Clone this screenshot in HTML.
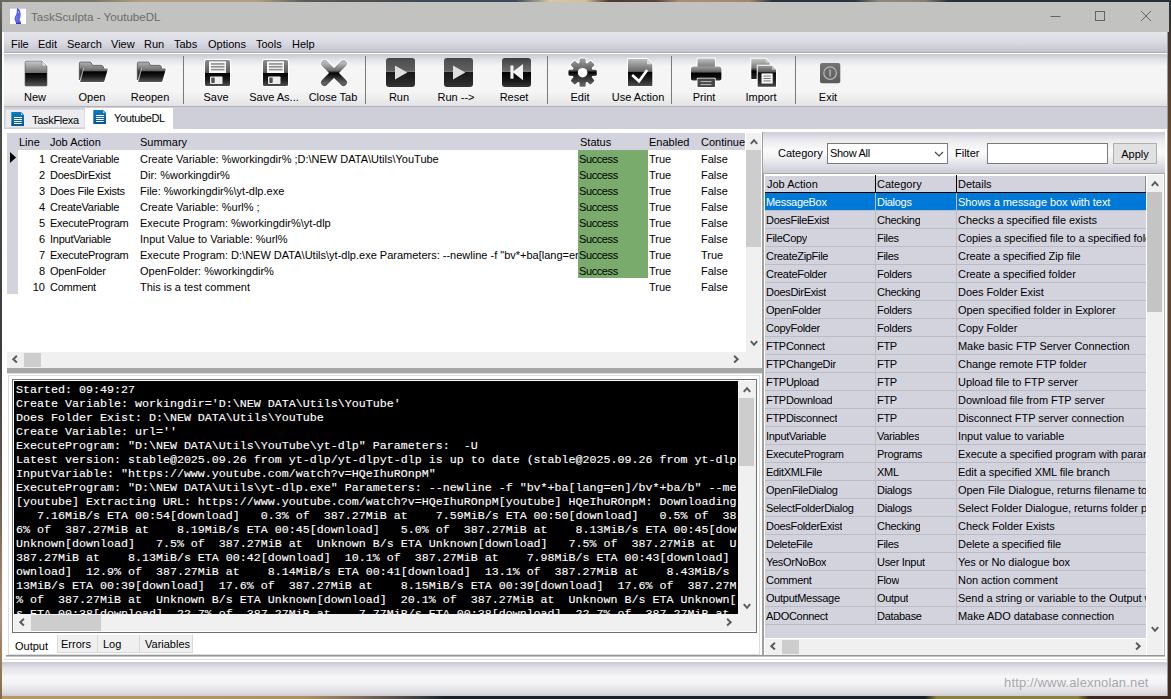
<!DOCTYPE html>
<html>
<head>
<meta charset="utf-8">
<title>TaskSculpta - YoutubeDL</title>
<style>
*{box-sizing:border-box;margin:0;padding:0}
html,body{width:1171px;height:699px;overflow:hidden;background:#5a5248}
body{font-family:"Liberation Sans",sans-serif;font-size:11px;color:#000;position:relative;line-height:13px}
.abs{position:absolute}
span,div{white-space:nowrap}
#desk{left:0;top:0;width:1171px;height:699px;background:#444}
#dt{left:0;top:0;width:1171px;height:2px;background:linear-gradient(90deg,#6a6a60 0,#7a7666 8%,#b0a080 12%,#b0a080 22%,#5a5a58 26%,#4a4e50 33%,#3a4a58 36%,#3a4a58 44%,#d8c8a0 47%,#d0c098 50%,#4a3a30 52%,#54443a 56%,#a89070 58%,#a08868 64%,#2a3440 66%,#2a3440 73%,#908878 75%,#888070 79%,#283038 81%,#283038 100%)}
#db{left:0;top:696px;width:1171px;height:3px;background:linear-gradient(90deg,#b89868 0,#b09060 26%,#7a6a58 31%,#3a3c40 36%,#1a2028 38%,#1a2028 79%,#8a8040 80%,#8a8040 92%,#3a2a20 93%,#3a2a20 100%)}
#dl{left:0;top:0;width:2px;height:699px;background:linear-gradient(180deg,#6a6860 0,#3c4246 8%,#4a4e4c 20%,#3a3c40 50%,#6a5a4c 70%,#b09078 88%,#8a6a48 100%)}
#dr{left:1168px;top:0;width:3px;height:699px;background:linear-gradient(180deg,#2a3036 0,#4a3a2c 8%,#6b4a30 22%,#5a4030 60%,#3a2a20 100%)}
#title{left:2px;top:2px;width:1167px;height:30px;background:#c2c2c0}
#menubar{left:4px;top:32px;width:1163px;height:20px;background:linear-gradient(#e4e4ea 0,#dadae2 50%,#c4c4d0 100%)}
#menubar span{position:absolute;top:6px}
#tbar{left:4px;top:53px;width:1163px;height:53px;background:linear-gradient(#fff 0,#fff 1px,#c8c8d2 1px,#dedee4 6px,#f0f0f2 11px,#f5f5f5 14px,#f5f5f5 38px,#ededee 46px,#e3e3e6 52px,#e3e3e6 100%)}
.lb{position:absolute;top:91px;width:80px;text-align:center}
.sep{position:absolute;top:56px;width:1px;height:48px;background:#7a7a7a}
#tabstrip{left:4px;top:106px;width:1163px;height:23px;background:#cfcfd9;border-top:1px solid #b2b2b8}
.hd{position:absolute;top:136px}
.lr{position:absolute;left:0;width:760px;height:16px}
.lr span{position:absolute;top:2px}
.rr{position:absolute;left:765px;width:381px;height:18px;border-bottom:1px solid #bcbcc4}
.rr span{position:absolute;top:3px;height:15px;overflow:hidden}
.rr .c1{left:1px;letter-spacing:-.3px}.rr .c2{left:112px;letter-spacing:-.3px}.rr .c3{left:193px;width:188px;letter-spacing:-.06px}
#con{left:14px;top:381px;width:724px;height:233px;background:#000;color:#fff;overflow:hidden;font-family:"Liberation Mono",monospace;font-size:11.67px;font-weight:normal;-webkit-text-stroke:.12px #fff;line-height:14px;padding:2px 0 0 2px}
#con div{white-space:pre;height:14px}
.sb{background:#f0f0f0}
.th{background:#cdcdcd}
</style>
</head>
<body>
<svg width="0" height="0" style="position:absolute"><defs><linearGradient id="gd" x1="0" y1="0" x2="0" y2="1"><stop offset="0" stop-color="#cacaca"/><stop offset="0.46" stop-color="#727272"/><stop offset="0.48" stop-color="#000"/><stop offset="0.7" stop-color="#1c1c1c"/><stop offset="1" stop-color="#555"/></linearGradient><linearGradient id="gfb" x1="0" y1="0" x2="0" y2="1"><stop offset="0" stop-color="#b4b4b4"/><stop offset="0.3" stop-color="#868686"/><stop offset="0.5" stop-color="#3a3a3a"/><stop offset="1" stop-color="#1e1e1e"/></linearGradient><linearGradient id="gff" x1="0" y1="0" x2="0" y2="1"><stop offset="0" stop-color="#909090"/><stop offset="0.22" stop-color="#626262"/><stop offset="0.3" stop-color="#000"/><stop offset="0.6" stop-color="#181818"/><stop offset="1" stop-color="#585858"/></linearGradient><linearGradient id="gs" x1="0" y1="0" x2="0" y2="1"><stop offset="0" stop-color="#8c8c8c"/><stop offset="0.48" stop-color="#5a5a5a"/><stop offset="0.5" stop-color="#000"/><stop offset="0.75" stop-color="#1a1a1a"/><stop offset="1" stop-color="#505050"/></linearGradient><linearGradient id="gl" x1="0" y1="0" x2="0" y2="1"><stop offset="0" stop-color="#6e6e6e"/><stop offset="1" stop-color="#c4c4c4"/></linearGradient><linearGradient id="gx" x1="0" y1="0" x2="0" y2="1"><stop offset="0" stop-color="#b4b4b4"/><stop offset="0.38" stop-color="#6c6c6c"/><stop offset="0.5" stop-color="#000"/><stop offset="0.62" stop-color="#181818"/><stop offset="1" stop-color="#5e5e5e"/></linearGradient><linearGradient id="gb" x1="0" y1="0" x2="0" y2="1"><stop offset="0" stop-color="#444"/><stop offset="0.1" stop-color="#505050"/><stop offset="0.42" stop-color="#5e5e5e"/><stop offset="0.47" stop-color="#7a7a7a"/><stop offset="0.5" stop-color="#181818"/><stop offset="0.8" stop-color="#262626"/><stop offset="1" stop-color="#343434"/></linearGradient><linearGradient id="gb2" x1="0" y1="0" x2="0" y2="1"><stop offset="0" stop-color="#3a3a3a"/><stop offset="0.1" stop-color="#4a4a4a"/><stop offset="0.42" stop-color="#6a6a6a"/><stop offset="0.47" stop-color="#7a7a7a"/><stop offset="0.5" stop-color="#000"/><stop offset="0.8" stop-color="#1a1a1a"/><stop offset="1" stop-color="#363636"/></linearGradient><linearGradient id="gg" x1="0" y1="0" x2="0" y2="1"><stop offset="0" stop-color="#9c9c9c"/><stop offset="0.4" stop-color="#606060"/><stop offset="0.49" stop-color="#000"/><stop offset="0.58" stop-color="#222"/><stop offset="1" stop-color="#666"/></linearGradient><linearGradient id="gu" x1="0" y1="0" x2="0" y2="1"><stop offset="0" stop-color="#bcbcbc"/><stop offset="0.46" stop-color="#686868"/><stop offset="0.48" stop-color="#000"/><stop offset="0.75" stop-color="#202020"/><stop offset="1" stop-color="#4e4e4e"/></linearGradient><linearGradient id="gpp" x1="0" y1="0" x2="0" y2="1"><stop offset="0" stop-color="#c0c0c0"/><stop offset="1" stop-color="#7a7a7a"/></linearGradient><linearGradient id="gpb" x1="0" y1="0" x2="0" y2="1"><stop offset="0" stop-color="#a0a0a0"/><stop offset="0.35" stop-color="#6a6a6a"/><stop offset="0.5" stop-color="#000"/><stop offset="0.8" stop-color="#101010"/><stop offset="1" stop-color="#303030"/></linearGradient><linearGradient id="gi1" x1="0" y1="0" x2="0" y2="1"><stop offset="0" stop-color="#c4c4c4"/><stop offset="0.45" stop-color="#7a7a7a"/><stop offset="0.62" stop-color="#000"/><stop offset="1" stop-color="#2a2a2a"/></linearGradient><linearGradient id="gi2" x1="0" y1="0" x2="0" y2="1"><stop offset="0" stop-color="#9c9c9c"/><stop offset="0.28" stop-color="#5c5c5c"/><stop offset="0.34" stop-color="#0c0c0c"/><stop offset="0.7" stop-color="#222"/><stop offset="1" stop-color="#4a4a4a"/></linearGradient><linearGradient id="ge" x1="0" y1="0" x2="0" y2="1"><stop offset="0" stop-color="#747474"/><stop offset="1" stop-color="#5a5a5a"/></linearGradient><linearGradient id="gt" x1="0" y1="0" x2="0" y2="1"><stop offset="0" stop-color="#0c7cc0"/><stop offset="1" stop-color="#065892"/></linearGradient></defs></svg>
<div id="desk" class="abs"></div><div id="dt" class="abs"></div><div id="db" class="abs"></div><div id="dl" class="abs"></div><div id="dr" class="abs"></div>
<div class="abs" style="left:2px;top:2px;width:1166px;height:694px;background:#fff;border-bottom:1px solid #8c8c8c;border-right:1px solid #9a9a9a"></div>
<div id="title" class="abs"></div>

<svg class="abs" style="left:10px;top:8px" width="16" height="16" viewBox="0 0 16 16"><rect width="16" height="16" fill="#fff"/><rect width="16" height="1" fill="#ccd0ff"/><path d="M7.300 .3C8.500 .8 9.500 1.800 10.200 3.600C10.800 5.200 10.900 7.200 10.400 9.200C10 10.600 9.400 11.500 9.800 12.600C10.100 13.400 10.900 13.800 11 14.600V15.800H6V14.700C5.300 13.600 4.600 12.200 4.500 10.600C4.500 9.200 5.300 8 6 6.900C6.500 5.900 6.700 4.600 6.800 3.200C6.800 2.100 7 1.100 7.300 .3Z" fill="#5c62ea"/><path d="M7.300 .3C8.500 .8 9.500 1.800 10.100 3.400L8.800 2.600C8.300 2 7.800 1.800 7.400 1.900Z" fill="#3a3ec8"/><path d="M8.300 3.200C8.900 3.800 9 4.800 8.700 5.400C8.300 5 8 4.200 8.300 3.200Z" fill="#e8eaff"/><path d="M7.200 8C6.600 9.500 6.600 11 7.200 12.500" stroke="#8a90f4" stroke-width=".8" fill="none"/><rect x="6" y="14.800" width="5" height="1.200" fill="#3236c4"/></svg>
<span class="abs" style="left:31px;top:10px;font-size:11.600px;color:#6c6c6c;line-height:14px">TaskSculpta - YoutubeDL</span>
<svg class="abs" style="left:1040px;top:2px" width="129" height="30" viewBox="0 0 129 30"><path d="M10.500 14.500h10" stroke="#666" stroke-width="1" fill="none"/><rect x="55.500" y="9.500" width="9" height="9" stroke="#666" stroke-width="1" fill="none"/><path d="M101 9l10 10M111 9l-10 10" stroke="#666" stroke-width="1" fill="none"/></svg>
<div id="menubar" class="abs">
<span style="left:7px">File</span>
<span style="left:34px">Edit</span>
<span style="left:63px">Search</span>
<span style="left:107px">View</span>
<span style="left:140px">Run</span>
<span style="left:170px">Tabs</span>
<span style="left:204px">Options</span>
<span style="left:252px">Tools</span>
<span style="left:288px">Help</span>
</div>
<div class="abs" style="left:4px;top:52px;width:1163px;height:1px;background:#a8a8b0"></div>
<div id="tbar" class="abs"></div>
<svg class="abs" style="left:23px;top:59px;overflow:visible" width="28" height="31" viewBox="0 0 28 31"><path d="M2 2H19L24 7V27H2Z" fill="#fff" stroke="#fff" stroke-width="2" stroke-linejoin="round"/><path d="M2.800 2H19L24 7V26.200Q24 27 23.200 27H2.800Q2 27 2 26.200V2.800Q2 2 2.800 2Z" fill="url(#gd)" stroke="#505050" stroke-width=".6"/><path d="M19 2V7H24Z" fill="#e4e4e4"/><path d="M19 2V7H24" fill="none" stroke="#8a8a8a" stroke-width=".7"/></svg>
<span class="lb" style="left:-5px">New</span>
<svg class="abs" style="left:76px;top:59px;overflow:visible" width="36" height="28" viewBox="0 0 36 28"><path d="M3.300 4.200Q3.300 3 4.500 3H14Q15 3 15.300 4L16.500 6.300H25.500Q26.500 6.300 27 7.200L27.800 9.200L31 9.500Q32 9.500 31.800 10.300L28.300 22.200Q28 23 27.200 23H4.800Q3.300 23 3.300 21Z" fill="#fff" stroke="#fff" stroke-width="2" stroke-linejoin="round"/><path d="M3.300 4.200Q3.300 3 4.500 3H14Q15 3 15.300 4L16.500 6.300H25.500Q26.500 6.300 27 7.200L27.600 9V12H7L3.300 21Z" fill="url(#gfb)" stroke="#4c4c4c" stroke-width=".8"/><path d="M8.300 8.500Q7.600 8.500 7.300 9.300L4 22Q3.800 23 4.800 23H27.200Q28 23 28.300 22.200L31.800 10.300Q32 9.500 31 9.500Z" fill="url(#gff)"/><path d="M7.600 9.200L4.300 22" stroke="#e0e0e0" stroke-width=".7" fill="none"/></svg>
<span class="lb" style="left:52px">Open</span>
<svg class="abs" style="left:134px;top:59px;overflow:visible" width="36" height="28" viewBox="0 0 36 28"><path d="M3.300 4.200Q3.300 3 4.500 3H14Q15 3 15.300 4L16.500 6.300H25.500Q26.500 6.300 27 7.200L27.800 9.200L31 9.500Q32 9.500 31.800 10.300L28.300 22.200Q28 23 27.200 23H4.800Q3.300 23 3.300 21Z" fill="#fff" stroke="#fff" stroke-width="2" stroke-linejoin="round"/><path d="M3.300 4.200Q3.300 3 4.500 3H14Q15 3 15.300 4L16.500 6.300H25.500Q26.500 6.300 27 7.200L27.600 9V12H7L3.300 21Z" fill="url(#gfb)" stroke="#4c4c4c" stroke-width=".8"/><path d="M8.300 8.500Q7.600 8.500 7.300 9.300L4 22Q3.800 23 4.800 23H27.200Q28 23 28.300 22.200L31.800 10.300Q32 9.500 31 9.500Z" fill="url(#gff)"/><path d="M7.600 9.200L4.300 22" stroke="#e0e0e0" stroke-width=".7" fill="none"/></svg>
<span class="lb" style="left:110px">Reopen</span>
<svg class="abs" style="left:203px;top:58px;overflow:visible" width="30" height="30" viewBox="0 0 30 30"><rect x="2" y="2" width="25" height="26" rx="1.500" fill="#fff" stroke="#fff" stroke-width="2" stroke-linejoin="round"/><rect x="2" y="2" width="25" height="26" rx="1.500" fill="url(#gs)"/><rect x="6" y="3.300" width="17" height="11.700" fill="#f6f6f6"/><rect x="8" y="5.300" width="13.500" height="1.800" fill="url(#gl)"/><rect x="8" y="8.100" width="13.500" height="1.800" fill="url(#gl)"/><rect x="8" y="10.900" width="13.500" height="1.800" fill="url(#gl)"/><rect x="7" y="18.500" width="12.500" height="7.500" rx=".8" fill="#ececec"/><rect x="8.300" y="19.500" width="3.400" height="5.500" rx=".8" fill="#505050"/></svg>
<span class="lb" style="left:176px">Save</span>
<svg class="abs" style="left:261px;top:58px;overflow:visible" width="30" height="30" viewBox="0 0 30 30"><rect x="2" y="2" width="25" height="26" rx="1.500" fill="#fff" stroke="#fff" stroke-width="2" stroke-linejoin="round"/><rect x="2" y="2" width="25" height="26" rx="1.500" fill="url(#gs)"/><rect x="6" y="3.300" width="17" height="11.700" fill="#f6f6f6"/><rect x="8" y="5.300" width="13.500" height="1.800" fill="url(#gl)"/><rect x="8" y="8.100" width="13.500" height="1.800" fill="url(#gl)"/><rect x="8" y="10.900" width="13.500" height="1.800" fill="url(#gl)"/><rect x="7" y="18.500" width="12.500" height="7.500" rx=".8" fill="#ececec"/><rect x="8.300" y="19.500" width="3.400" height="5.500" rx=".8" fill="#505050"/></svg>
<span class="lb" style="left:234px">Save As...</span>
<svg class="abs" style="left:319px;top:58px;overflow:visible" width="30" height="30" viewBox="0 0 30 30"><path d="M5.500 5.500L24.500 24.500M24.500 5.500L5.500 24.500" stroke="#fff" stroke-width="9" stroke-linecap="round" fill="none"/><path d="M5.500 5.500L24.500 24.500" stroke="url(#gx)" stroke-width="7" stroke-linecap="round" fill="none" gradientUnits="userSpaceOnUse"/><path d="M24.500 5.500L5.500 24.500" stroke="url(#gx)" stroke-width="7" stroke-linecap="round" fill="none"/></svg>
<span class="lb" style="left:293px">Close Tab</span>
<svg class="abs" style="left:386px;top:58px;overflow:visible" width="29" height="29" viewBox="0 0 29 29"><rect width="29" height="29" rx="3" fill="url(#gb)"/><path d="M9 7.500L21.300 14.500L9 21.500Z" fill="#dedede"/></svg>
<span class="lb" style="left:359px">Run</span>
<svg class="abs" style="left:444px;top:58px;overflow:visible" width="29" height="29" viewBox="0 0 29 29"><rect width="29" height="29" rx="3" fill="url(#gb)"/><path d="M9 7.500L21.300 14.500L9 21.500Z" fill="#dedede"/></svg>
<span class="lb" style="left:416px">Run --&gt;</span>
<svg class="abs" style="left:502px;top:58px;overflow:visible" width="29" height="29" viewBox="0 0 29 29"><rect width="29" height="29" rx="3" fill="url(#gb2)"/><rect x="8.400" y="7.500" width="3.100" height="13.200" fill="#f2f2f2"/><path d="M21 6V22.200L10.500 14.100Z" fill="#f2f2f2"/></svg>
<span class="lb" style="left:474px">Reset</span>
<svg class="abs" style="left:567px;top:57px;overflow:visible" width="32" height="32" viewBox="0 0 32 32"><path d="M13.61 2.55L17.59 2.55L17.81 6.67L20.42 7.75L23.49 5.00L26.30 7.81L23.55 10.88L24.63 13.49L28.75 13.71L28.75 17.69L24.63 17.91L23.55 20.52L26.30 23.59L23.49 26.40L20.42 23.65L17.81 24.73L17.59 28.85L13.61 28.85L13.39 24.73L10.78 23.65L7.71 26.40L4.90 23.59L7.65 20.52L6.57 17.91L2.45 17.69L2.45 13.71L6.57 13.49L7.65 10.88L4.90 7.81L7.71 5.00L10.78 7.75L13.39 6.67Z" fill="#fff" stroke="#fff" stroke-width="4" stroke-linejoin="round"/><path d="M13.61 2.55L17.59 2.55L17.81 6.67L20.42 7.75L23.49 5.00L26.30 7.81L23.55 10.88L24.63 13.49L28.75 13.71L28.75 17.69L24.63 17.91L23.55 20.52L26.30 23.59L23.49 26.40L20.42 23.65L17.81 24.73L17.59 28.85L13.61 28.85L13.39 24.73L10.78 23.65L7.71 26.40L4.90 23.59L7.65 20.52L6.57 17.91L2.45 17.69L2.45 13.71L6.57 13.49L7.65 10.88L4.90 7.81L7.71 5.00L10.78 7.75L13.39 6.67Z" fill="url(#gg)" stroke="url(#gg)" stroke-width="2" stroke-linejoin="round"/><circle cx="15.6" cy="15.7" r="4.800" fill="#fff"/></svg>
<span class="lb" style="left:540px">Edit</span>
<svg class="abs" style="left:626px;top:57px;overflow:visible" width="28" height="32" viewBox="0 0 28 32"><path d="M2 2H21L26.300 7.300V29H2Z" fill="#fff" stroke="#fff" stroke-width="2" stroke-linejoin="round"/><path d="M2 2H21L26.300 7.300V29H2Z" fill="url(#gu)"/><path d="M21 2V7.300H26.300Z" fill="#dadada"/><path d="M6.200 18L13 24.300L21.200 13" stroke="#fff" stroke-width="2.600" fill="none" stroke-linejoin="miter"/></svg>
<span class="lb" style="left:598px">Use Action</span>
<svg class="abs" style="left:690px;top:57px;overflow:visible" width="33" height="32" viewBox="0 0 33 32"><path d="M7.500 1.500H25V9.500H29c1.500 0 2.400.9 2.400 2.400V23.500H25V30H7.500V23.500H1V11.900C1 10.400 1.900 9.500 3.400 9.500H7.500Z" fill="#fff" stroke="#fff" stroke-width="2" stroke-linejoin="round"/><rect x="7.500" y="1.500" width="17.500" height="8.500" rx="1" fill="url(#gpp)"/><path d="M1 12.300C1 10.500 2 9.500 3.800 9.500H28.600c1.800 0 2.800 1 2.800 2.800V21.500c0 1.300-.7 2-2 2H3c-1.300 0-2-.7-2-2Z" fill="url(#gpb)"/><rect x="6.800" y="20.800" width="18.900" height="9.900" rx="1" fill="#fff"/><rect x="7.500" y="21.500" width="17.500" height="8.500" rx=".8" fill="#484848"/><rect x="10.500" y="24" width="11" height="1.100" fill="#b4b4b4"/><rect x="10.500" y="27" width="11" height="1.100" fill="#b4b4b4"/></svg>
<span class="lb" style="left:664px">Print</span>
<svg class="abs" style="left:750px;top:57px;overflow:visible" width="28" height="32" viewBox="0 0 28 32"><path d="M1.300 1.800H15.700L19.700 5.800V22H1.300Z" fill="#fff" stroke="#fff" stroke-width="2" stroke-linejoin="round"/><path d="M1.300 1.800H15.700L19.700 5.800V22H1.300Z" fill="url(#gi1)"/><path d="M15.700 1.800V5.800H19.700Z" fill="#d0d0d0"/><path d="M7.700 8.700H22L26 12.700V29.800H7.700Z" fill="#fff" stroke="#fff" stroke-width="2" stroke-linejoin="round"/><path d="M7.700 8.700H22L26 12.700V29.800H7.700Z" fill="url(#gi2)"/><path d="M22 8.700V12.700H26Z" fill="#c4c4c4"/><rect x="11.500" y="16.400" width="11.200" height="10.200" fill="#f4f4f4"/><rect x="13.500" y="18.600" width="7.200" height="1" fill="#777"/><rect x="13.500" y="21" width="7.200" height="1" fill="#777"/><rect x="13.500" y="23.400" width="7.200" height="1" fill="#777"/></svg>
<span class="lb" style="left:721px">Import</span>
<svg class="abs" style="left:818px;top:61px;overflow:visible" width="24" height="24" viewBox="0 0 24 24"><rect x="2" y="2" width="20.300" height="20.300" rx="2" fill="url(#ge)"/><circle cx="12.100" cy="12.100" r="6.300" fill="none" stroke="#b6b6b6" stroke-width="1.300"/><rect x="11.400" y="8.600" width="1.400" height="7" fill="#b6b6b6"/></svg>
<span class="lb" style="left:788px">Exit</span>
<div class="sep" style="left:183px"></div>
<div class="sep" style="left:365px"></div>
<div class="sep" style="left:547px"></div>
<div class="sep" style="left:671px"></div>
<div class="sep" style="left:795px"></div>
<div id="tabstrip" class="abs"></div>
<div class="abs" style="left:5px;top:109px;width:80px;height:19px;background:#ececf0;border:1px solid #dadae0"></div>
<div class="abs" style="left:85px;top:108px;width:88px;height:22px;background:#fff"></div>
<svg class="abs" style="left:11px;top:112px;overflow:visible" width="13" height="15" viewBox="0 0 13 15"><path d="M.3 0H10L13 3V14H.3Z" fill="url(#gt)"/><path d="M10 0V3H13Z" fill="#fff"/><path d="M10.300 .2L12.800 2.700H11.300Q10.300 2.700 10.300 1.700Z" fill="#1878b8"/><rect x="3" y="5" width="8" height="1" fill="#fff"/><rect x="3" y="7" width="8" height="1" fill="#fff"/><rect x="3" y="9" width="7.700" height="1" fill="#fff"/><rect x="3" y="11" width="7.700" height="1" fill="#fff"/></svg>
<span class="abs" style="left:32px;top:114px;letter-spacing:-.3px">TaskFlexa</span>
<svg class="abs" style="left:93px;top:110px;overflow:visible" width="13" height="15" viewBox="0 0 13 15"><path d="M.3 0H10L13 3V14H.3Z" fill="url(#gt)"/><path d="M10 0V3H13Z" fill="#fff"/><path d="M10.300 .2L12.800 2.700H11.300Q10.300 2.700 10.300 1.700Z" fill="#1878b8"/><rect x="3" y="5" width="8" height="1" fill="#fff"/><rect x="3" y="7" width="8" height="1" fill="#fff"/><rect x="3" y="9" width="7.700" height="1" fill="#fff"/><rect x="3" y="11" width="7.700" height="1" fill="#fff"/></svg>
<span class="abs" style="left:114px;top:112px;letter-spacing:-.35px">YoutubeDL</span>
<div class="abs" style="left:4px;top:129px;width:1163px;height:528px;background:#fff"></div>
<div class="abs" style="left:7px;top:133px;width:738px;height:17px;background:#d3d3de"></div>
<div class="abs" style="left:7px;top:150px;width:11px;height:144px;background:#d3d3de"></div>
<span class="hd" style="left:19px">Line</span>
<span class="hd" style="left:50px">Job Action</span>
<span class="hd" style="left:140px">Summary</span>
<span class="hd" style="left:580px">Status</span>
<span class="hd" style="left:649px">Enabled</span>
<span class="hd" style="left:701px">Continue</span>
<svg class="abs" style="left:10px;top:152px" width="6" height="11" viewBox="0 0 6 11"><path d="M0 0l6 5.500-6 5.500z" fill="#000"/></svg>
<div class="abs" style="left:578px;top:150px;width:70px;height:128px;background:#78ab6c"></div>
<div class="lr" style="top:151px"><span style="left:20px;width:25px;text-align:right">1</span><span style="left:50px;letter-spacing:-.25px">CreateVariable</span><span style="left:140px;width:438px;overflow:hidden">Create Variable: %workingdir% ;D:\NEW DATA\Utils\YouTube</span><span style="left:579px;letter-spacing:-.4px">Success</span><span style="left:649px">True</span><span style="left:701px">False</span></div>
<div class="lr" style="top:167px"><span style="left:20px;width:25px;text-align:right">2</span><span style="left:50px;letter-spacing:-.25px">DoesDirExist</span><span style="left:140px;width:438px;overflow:hidden">Dir: %workingdir%</span><span style="left:579px;letter-spacing:-.4px">Success</span><span style="left:649px">True</span><span style="left:701px">False</span></div>
<div class="lr" style="top:183px"><span style="left:20px;width:25px;text-align:right">3</span><span style="left:50px;letter-spacing:-.25px">Does File Exists</span><span style="left:140px;width:438px;overflow:hidden">File: %workingdir%\yt-dlp.exe</span><span style="left:579px;letter-spacing:-.4px">Success</span><span style="left:649px">True</span><span style="left:701px">False</span></div>
<div class="lr" style="top:199px"><span style="left:20px;width:25px;text-align:right">4</span><span style="left:50px;letter-spacing:-.25px">CreateVariable</span><span style="left:140px;width:438px;overflow:hidden">Create Variable: %url% ;</span><span style="left:579px;letter-spacing:-.4px">Success</span><span style="left:649px">True</span><span style="left:701px">False</span></div>
<div class="lr" style="top:215px"><span style="left:20px;width:25px;text-align:right">5</span><span style="left:50px;letter-spacing:-.25px">ExecuteProgram</span><span style="left:140px;width:438px;overflow:hidden">Execute Program: %workingdir%\yt-dlp</span><span style="left:579px;letter-spacing:-.4px">Success</span><span style="left:649px">True</span><span style="left:701px">False</span></div>
<div class="lr" style="top:231px"><span style="left:20px;width:25px;text-align:right">6</span><span style="left:50px;letter-spacing:-.25px">InputVariable</span><span style="left:140px;width:438px;overflow:hidden">Input Value to Variable: %url%</span><span style="left:579px;letter-spacing:-.4px">Success</span><span style="left:649px">True</span><span style="left:701px">False</span></div>
<div class="lr" style="top:247px"><span style="left:20px;width:25px;text-align:right">7</span><span style="left:50px;letter-spacing:-.25px">ExecuteProgram</span><span style="left:140px;width:438px;overflow:hidden">Execute Program: D:\NEW DATA\Utils\yt-dlp.exe Parameters: --newline -f "bv*+ba[lang=en]/bv*+ba/b"</span><span style="left:579px;letter-spacing:-.4px">Success</span><span style="left:649px">True</span><span style="left:701px">True</span></div>
<div class="lr" style="top:263px"><span style="left:20px;width:25px;text-align:right">8</span><span style="left:50px;letter-spacing:-.25px">OpenFolder</span><span style="left:140px;width:438px;overflow:hidden">OpenFolder: %workingdir%</span><span style="left:579px;letter-spacing:-.4px">Success</span><span style="left:649px">True</span><span style="left:701px">False</span></div>
<div class="lr" style="top:279px"><span style="left:20px;width:25px;text-align:right">10</span><span style="left:50px;letter-spacing:-.25px">Comment</span><span style="left:140px;width:438px;overflow:hidden">This is a test comment</span><span style="left:579px;letter-spacing:-.4px"></span><span style="left:649px">True</span><span style="left:701px">False</span></div>
<div class="abs sb" style="left:746px;top:133px;width:15px;height:219px"></div>
<div class="abs th" style="left:746px;top:150px;width:15px;height:97px"></div>
<svg class="abs" style="left:750px;top:138px" width="8" height="7"><path d="M.8 5.800L4 2.200L7.200 5.800" stroke="#5c5c5c" stroke-width="2" fill="none"/></svg>
<svg class="abs" style="left:750px;top:340px" width="8" height="7"><path d="M.8 1.200L4 4.800L7.200 1.200" stroke="#5c5c5c" stroke-width="2" fill="none"/></svg>
<div class="abs sb" style="left:7px;top:352px;width:754px;height:16px"></div>
<div class="abs th" style="left:24px;top:353px;width:17px;height:14px"></div>
<svg class="abs" style="left:11px;top:355px" width="7" height="9"><path d="M5.900 .8L2.300 4.200L5.900 7.600" stroke="#5c5c5c" stroke-width="2" fill="none"/></svg>
<svg class="abs" style="left:733px;top:355px" width="7" height="9"><path d="M1.100 .8L4.700 4.200L1.100 7.600" stroke="#5c5c5c" stroke-width="2" fill="none"/></svg>
<div class="abs" style="left:7px;top:368px;width:756px;height:6px;background:linear-gradient(#a6a6a6 0,#a6a6a6 5px,#dcdcdc 5px)"></div>
<div class="abs" style="left:762px;top:132px;width:2px;height:524px;background:#a0a0a0"></div>
<div class="abs" style="left:8px;top:375px;width:752px;height:280px;border:1px solid #dcdcdc"></div>
<div class="abs" style="left:12px;top:379px;width:745px;height:254px;border:1px solid #707070"></div>
<div id="con" class="abs"><div>Started: 09:49:27</div><div>Create Variable: workingdir='D:\NEW DATA\Utils\YouTube'</div><div>Does Folder Exist: D:\NEW DATA\Utils\YouTube</div><div>Create Variable: url=''</div><div>ExecuteProgram: "D:\NEW DATA\Utils\YouTube\yt-dlp" Parameters:  -U</div><div>Latest version: stable@2025.09.26 from yt-dlp/yt-dlpyt-dlp is up to date (stable@2025.09.26 from yt-dlp</div><div>InputVariable: "https://www.youtube.com/watch?v=HQeIhuROnpM"</div><div>ExecuteProgram: "D:\NEW DATA\Utils\yt-dlp.exe" Parameters: --newline -f "bv*+ba[lang=en]/bv*+ba/b" --me</div><div>[youtube] Extracting URL: https://www.youtube.com/watch?v=HQeIhuROnpM[youtube] HQeIhuROnpM: Downloading</div><div>   7.16MiB/s ETA 00:54[download]   0.3% of  387.27MiB at    7.59MiB/s ETA 00:50[download]   0.5% of  38</div><div>6% of  387.27MiB at    8.19MiB/s ETA 00:45[download]   5.0% of  387.27MiB at    8.13MiB/s ETA 00:45[dow</div><div>Unknown[download]   7.5% of  387.27MiB at  Unknown B/s ETA Unknown[download]   7.5% of  387.27MiB at  U</div><div>387.27MiB at    8.13MiB/s ETA 00:42[download]  10.1% of  387.27MiB at    7.98MiB/s ETA 00:43[download] </div><div>ownload]  12.9% of  387.27MiB at    8.14MiB/s ETA 00:41[download]  13.1% of  387.27MiB at    8.43MiB/s </div><div>13MiB/s ETA 00:39[download]  17.6% of  387.27MiB at    8.15MiB/s ETA 00:39[download]  17.6% of  387.27M</div><div>% of  387.27MiB at  Unknown B/s ETA Unknown[download]  20.1% of  387.27MiB at  Unknown B/s ETA Unknown[</div><div>s ETA 00:38[download]  22.7% of  387.27MiB at    7.77MiB/s ETA 00:38[download]  22.7% of  387.27MiB at </div></div>
<div class="abs sb" style="left:738px;top:381px;width:18px;height:233px"></div>
<div class="abs th" style="left:739px;top:398px;width:15px;height:68px"></div>
<svg class="abs" style="left:743px;top:386px" width="8" height="7"><path d="M.8 5.800L4 2.200L7.200 5.800" stroke="#5c5c5c" stroke-width="2" fill="none"/></svg>
<svg class="abs" style="left:743px;top:603px" width="8" height="7"><path d="M.8 1.200L4 4.800L7.200 1.200" stroke="#5c5c5c" stroke-width="2" fill="none"/></svg>
<div class="abs sb" style="left:14px;top:614px;width:742px;height:17px"></div>
<div class="abs th" style="left:31px;top:615px;width:70px;height:16px"></div>
<svg class="abs" style="left:18px;top:618px" width="7" height="9"><path d="M5.900 .8L2.300 4.200L5.900 7.600" stroke="#5c5c5c" stroke-width="2" fill="none"/></svg>
<svg class="abs" style="left:726px;top:618px" width="7" height="9"><path d="M1.100 .8L4.700 4.200L1.100 7.600" stroke="#5c5c5c" stroke-width="2" fill="none"/></svg>
<div class="abs" style="left:57px;top:635px;width:136px;height:18px;background:#f0f0f0;border:1px solid #d9d9d9;border-top:0"></div>
<div class="abs" style="left:97px;top:635px;width:1px;height:18px;background:#d9d9d9"></div>
<div class="abs" style="left:139px;top:635px;width:1px;height:18px;background:#d9d9d9"></div>
<span class="abs" style="left:15px;top:640px">Output</span>
<span class="abs" style="left:61px;top:638px">Errors</span>
<span class="abs" style="left:103px;top:638px">Log</span>
<span class="abs" style="left:145px;top:638px">Variables</span>
<div class="abs" style="left:763px;top:132px;width:402px;height:42px;background:linear-gradient(#cdcdd8 0,#ececf0 22%,#fafafb 45%,#f4f4f6 60%,#cbcbd6 100%);border-bottom:1px solid #a8a8ae"></div>
<span class="abs" style="left:778px;top:147px">Category</span>
<div class="abs" style="left:827px;top:143px;width:121px;height:21px;background:#fff;border:1px solid #7a7a7a"></div>
<span class="abs" style="left:830px;top:147px;letter-spacing:-.3px">Show All</span>
<svg class="abs" style="left:934px;top:151px" width="10" height="6"><path d="M1 1l4 4 4-4" stroke="#444" stroke-width="1.100" fill="none"/></svg>
<span class="abs" style="left:955px;top:147px">Filter</span>
<div class="abs" style="left:987px;top:143px;width:121px;height:21px;background:#fff;border:1px solid #7a7a7a"></div>
<div class="abs" style="left:1113px;top:143px;width:44px;height:21px;background:#e1e1e1;border:1px solid #adadad"></div>
<span class="abs" style="left:1113px;top:148px;width:44px;text-align:center">Apply</span>
<div class="abs" style="left:765px;top:176px;width:381px;height:462px;background:#d3d3de"></div>
<div class="abs" style="left:765px;top:192px;width:381px;height:1px;background:#000"></div>
<div class="abs" style="left:765px;top:193px;width:381px;height:17px;background:#0078d7"></div>
<div class="abs" style="left:875px;top:175px;width:1px;height:18px;background:#000"></div>
<div class="abs" style="left:956px;top:175px;width:1px;height:18px;background:#000"></div>
<div class="abs" style="left:1145px;top:176px;width:1px;height:16px;background:#8a8a8a"></div>
<div class="abs" style="left:875px;top:193px;width:1px;height:432px;background:#bcbcc4"></div>
<div class="abs" style="left:956px;top:193px;width:1px;height:432px;background:#bcbcc4"></div>
<span class="abs" style="left:767px;top:178px">Job Action</span>
<span class="abs" style="left:877px;top:178px">Category</span>
<span class="abs" style="left:958px;top:178px">Details</span>
<div class="rr" style="top:193px;color:#fff"><span class="c1">MessageBox</span><span class="c2">Dialogs</span><span class="c3">Shows a message box with text</span></div>
<div class="rr" style="top:211px"><span class="c1">DoesFileExist</span><span class="c2">Checking</span><span class="c3">Checks a specified file exists</span></div>
<div class="rr" style="top:229px"><span class="c1">FileCopy</span><span class="c2">Files</span><span class="c3">Copies a specified file to a specified folder</span></div>
<div class="rr" style="top:247px"><span class="c1">CreateZipFile</span><span class="c2">Files</span><span class="c3">Create a specified Zip file</span></div>
<div class="rr" style="top:265px"><span class="c1">CreateFolder</span><span class="c2">Folders</span><span class="c3">Create a specified folder</span></div>
<div class="rr" style="top:283px"><span class="c1">DoesDirExist</span><span class="c2">Checking</span><span class="c3">Does Folder Exist</span></div>
<div class="rr" style="top:301px"><span class="c1">OpenFolder</span><span class="c2">Folders</span><span class="c3">Open specified folder in Explorer</span></div>
<div class="rr" style="top:319px"><span class="c1">CopyFolder</span><span class="c2">Folders</span><span class="c3">Copy Folder</span></div>
<div class="rr" style="top:337px"><span class="c1">FTPConnect</span><span class="c2">FTP</span><span class="c3">Make basic FTP Server Connection</span></div>
<div class="rr" style="top:355px"><span class="c1">FTPChangeDir</span><span class="c2">FTP</span><span class="c3">Change remote FTP folder</span></div>
<div class="rr" style="top:373px"><span class="c1">FTPUpload</span><span class="c2">FTP</span><span class="c3">Upload file to FTP server</span></div>
<div class="rr" style="top:391px"><span class="c1">FTPDownload</span><span class="c2">FTP</span><span class="c3">Download file from FTP server</span></div>
<div class="rr" style="top:409px"><span class="c1">FTPDisconnect</span><span class="c2">FTP</span><span class="c3">Disconnect FTP server connection</span></div>
<div class="rr" style="top:427px"><span class="c1">InputVariable</span><span class="c2">Variables</span><span class="c3">Input value to variable</span></div>
<div class="rr" style="top:445px"><span class="c1">ExecuteProgram</span><span class="c2">Programs</span><span class="c3">Execute a specified program with parameters</span></div>
<div class="rr" style="top:463px"><span class="c1">EditXMLFile</span><span class="c2">XML</span><span class="c3">Edit a specified XML file branch</span></div>
<div class="rr" style="top:481px"><span class="c1">OpenFileDialog</span><span class="c2">Dialogs</span><span class="c3">Open File Dialogue, returns filename to variable</span></div>
<div class="rr" style="top:499px"><span class="c1">SelectFolderDialog</span><span class="c2">Dialogs</span><span class="c3">Select Folder Dialogue, returns folder path</span></div>
<div class="rr" style="top:517px"><span class="c1">DoesFolderExist</span><span class="c2">Checking</span><span class="c3">Check Folder Exists</span></div>
<div class="rr" style="top:535px"><span class="c1">DeleteFile</span><span class="c2">Files</span><span class="c3">Delete a specified file</span></div>
<div class="rr" style="top:553px"><span class="c1">YesOrNoBox</span><span class="c2">User Input</span><span class="c3">Yes or No dialogue box</span></div>
<div class="rr" style="top:571px"><span class="c1">Comment</span><span class="c2">Flow</span><span class="c3">Non action comment</span></div>
<div class="rr" style="top:589px"><span class="c1">OutputMessage</span><span class="c2">Output</span><span class="c3">Send a string or variable to the Output window</span></div>
<div class="rr" style="top:607px"><span class="c1">ADOConnect</span><span class="c2">Database</span><span class="c3">Make ADO database connection</span></div>
<div class="abs sb" style="left:1147px;top:175px;width:16px;height:480px"></div>
<div class="abs th" style="left:1147px;top:192px;width:15px;height:120px;background:#c4c4c4"></div>
<svg class="abs" style="left:1151px;top:180px" width="8" height="7"><path d="M.8 5.800L4 2.200L7.200 5.800" stroke="#5c5c5c" stroke-width="2" fill="none"/></svg>
<svg class="abs" style="left:1151px;top:626px" width="8" height="7"><path d="M.8 1.200L4 4.800L7.200 1.200" stroke="#5c5c5c" stroke-width="2" fill="none"/></svg>
<div class="abs" style="left:1164px;top:174px;width:1px;height:482px;background:#b0b0b0"></div>
<div class="abs sb" style="left:765px;top:639px;width:381px;height:16px"></div>
<div class="abs th" style="left:782px;top:640px;width:17px;height:14px"></div>
<svg class="abs" style="left:769px;top:642px" width="7" height="9"><path d="M5.900 .8L2.300 4.200L5.900 7.600" stroke="#5c5c5c" stroke-width="2" fill="none"/></svg>
<svg class="abs" style="left:1135px;top:642px" width="7" height="9"><path d="M1.100 .8L4.700 4.200L1.100 7.600" stroke="#5c5c5c" stroke-width="2" fill="none"/></svg>
<div class="abs" style="left:6px;top:655px;width:1159px;height:2px;background:linear-gradient(#959595 0,#959595 50%,#c4c4c4 50%)"></div>
<div class="abs" style="left:4px;top:659px;width:1163px;height:1px;background:#dedede"></div>
<div class="abs" style="left:2px;top:662px;width:1165px;height:34px;background:linear-gradient(#c9c9d2 0,#e2e2e8 18%,#f6f6f7 42%,#f4f4f5 62%,#dedee2 88%,#cdcdd3 100%)"></div>
<span class="abs" style="left:1004px;top:675px;font-size:13px;line-height:15px;letter-spacing:.15px;color:#a6a6ae">http://www.alexnolan.net</span>
</body>
</html>
